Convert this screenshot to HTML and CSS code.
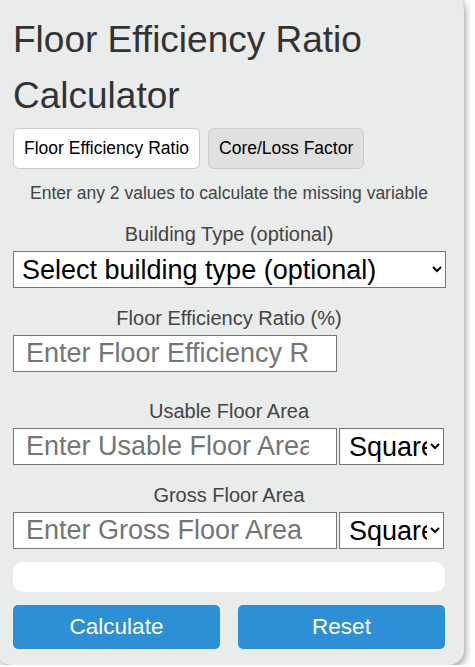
FILE: index.html
```html
<!DOCTYPE html>
<html lang="en">
<head>
    <meta charset="UTF-8">
    <meta name="viewport" content="width=device-width, initial-scale=1.0">
    <title>Floor Efficiency Ratio Calculator</title>
    <link rel="stylesheet" href="styles.css">
</head>
<body>
    <div class="calculator">
        <h1 class="title">Floor Efficiency Ratio Calculator</h1>

        <div class="tabs">
            <button class="tab active">Floor Efficiency Ratio</button>
            <button class="tab">Core/Loss Factor</button>
        </div>

        <p class="hint">Enter any 2 values to calculate the missing variable</p>

        <div class="field">
            <label class="field-label" for="building">Building Type (optional)</label>
            <select id="building" class="building-select">
                <option>Select building type (optional)</option>
                <option>Office</option>
                <option>Residential</option>
                <option>Retail</option>
                <option>Hospital</option>
            </select>
        </div>

        <div class="field field-ratio">
            <label class="field-label" for="ratio">Floor Efficiency Ratio (%)</label>
            <div class="field-row">
                <input type="number" id="ratio" class="field-input" placeholder="Enter Floor Efficiency Ratio">
            </div>
        </div>

        <div class="field">
            <label class="field-label" for="usable">Usable Floor Area</label>
            <div class="field-row">
                <input type="number" id="usable" class="field-input" placeholder="Enter Usable Floor Area">
                <select class="unit-select">
                    <option>Square Feet</option>
                    <option>Square Meters</option>
                </select>
            </div>
        </div>

        <div class="field">
            <label class="field-label" for="gross">Gross Floor Area</label>
            <div class="field-row">
                <input type="number" id="gross" class="field-input" placeholder="Enter Gross Floor Area">
                <select class="unit-select">
                    <option>Square Feet</option>
                    <option>Square Meters</option>
                </select>
            </div>
        </div>

        <div class="result" id="result"></div>

        <div class="actions">
            <button class="action-btn" onclick="calculate()">Calculate</button>
            <button class="action-btn" onclick="resetForm()">Reset</button>
        </div>
    </div>

    <script>
        function calculate() {
            var ratio = parseFloat(document.getElementById('ratio').value);
            var usable = parseFloat(document.getElementById('usable').value);
            var gross = parseFloat(document.getElementById('gross').value);
            var out = document.getElementById('result');

            if (!isNaN(usable) && !isNaN(gross)) {
                document.getElementById('ratio').value = (usable / gross * 100).toFixed(2);
                out.textContent = 'Floor Efficiency Ratio: ' + (usable / gross * 100).toFixed(2) + '%';
            } else if (!isNaN(ratio) && !isNaN(gross)) {
                document.getElementById('usable').value = (ratio / 100 * gross).toFixed(2);
                out.textContent = 'Usable Floor Area: ' + (ratio / 100 * gross).toFixed(2);
            } else if (!isNaN(ratio) && !isNaN(usable)) {
                document.getElementById('gross').value = (usable / (ratio / 100)).toFixed(2);
                out.textContent = 'Gross Floor Area: ' + (usable / (ratio / 100)).toFixed(2);
            } else {
                out.textContent = 'Please enter any 2 values';
            }
        }

        function resetForm() {
            document.getElementById('ratio').value = '';
            document.getElementById('usable').value = '';
            document.getElementById('gross').value = '';
            document.getElementById('result').textContent = '';
        }
    </script>
</body>
</html>
```

FILE: styles.css
```css
body {
    margin: 0;
    background-color: #fff;
    overflow: hidden;
    font-family: "Liberation Sans", Arial, sans-serif;
    color: #333;
}

.calculator {
    box-sizing: border-box;
    width: 468px;
    margin: -6px 0 0 -4px;
    padding: 18px 19px 16px 17px;
    background-color: #eaebeb;
    border-radius: 15px;
    box-shadow: 2px 3px 6px rgba(0, 0, 0, 0.35);
}

.title {
    margin: 0;
    font-size: 37px;
    line-height: 56px;
    font-weight: normal;
    color: #333;
}

.tabs {
    display: flex;
    gap: 8px;
    margin-top: 4px;
}

.tab {
    height: 41px;
    padding: 0 10px;
    border: 1px solid #ccc;
    border-radius: 6px;
    background-color: #e0e0e0;
    color: #000;
    font-family: inherit;
    font-size: 17.5px;
    cursor: pointer;
}

.tab.active {
    background-color: #fff;
}

.hint {
    margin: 14px 0 0;
    text-align: center;
    font-size: 17.5px;
    line-height: 21px;
    color: #444;
}

.field {
    margin-top: 18px;
}

.field-ratio {
    padding-bottom: 9px;
}

.field-label {
    display: block;
    margin-bottom: 5px;
    text-align: center;
    font-size: 20px;
    line-height: 24px;
    color: #444;
}

.building-select {
    box-sizing: border-box;
    width: 433px;
    height: 37px;
    padding: 0 4px;
    border: 1px solid #767676;
    border-radius: 0;
    background-color: #fff;
    color: #000;
    font-family: inherit;
    font-size: 27px;
}

.field-row {
    display: flex;
    gap: 2px;
}

.field-input {
    box-sizing: border-box;
    width: 324px;
    height: 37px;
    padding: 0 12px;
    border: 1px solid #767676;
    border-radius: 0;
    background-color: #fff;
    font-family: inherit;
    font-size: 27px;
}

.field-input::placeholder {
    color: #757575;
}

.unit-select {
    box-sizing: border-box;
    width: 105px;
    height: 37px;
    padding: 0 0 0 5px;
    border: 1px solid #767676;
    border-radius: 0;
    background-color: #fff;
    color: #000;
    font-family: inherit;
    font-size: 27px;
}

.result {
    height: 30px;
    margin-top: 13px;
    border-radius: 10px;
    background-color: #fff;
    text-align: center;
    font-size: 17.5px;
    line-height: 30px;
}

.actions {
    display: grid;
    grid-template-columns: 1fr 1fr;
    gap: 18px;
    margin-top: 13px;
}

.action-btn {
    height: 44px;
    border: none;
    border-radius: 5px;
    background-color: #2d8fd6;
    color: #fff;
    font-family: inherit;
    font-size: 22.5px;
    cursor: pointer;
}

.action-btn:hover {
    background-color: #2479b8;
}
```
